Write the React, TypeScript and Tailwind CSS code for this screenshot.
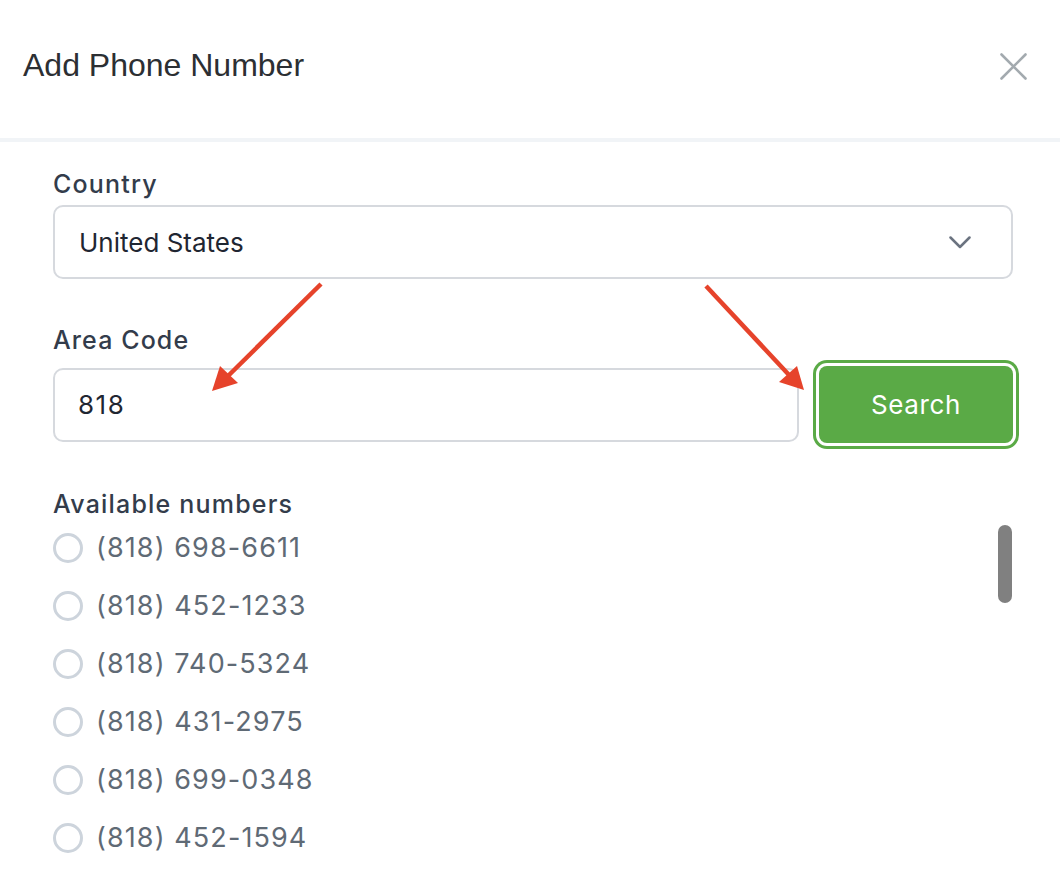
import React from "react";

const numbers = [
  "(818) 698-6611",
  "(818) 452-1233",
  "(818) 740-5324",
  "(818) 431-2975",
  "(818) 699-0348",
  "(818) 452-1594",
];

export default function App() {
  return (
    <div className="relative w-[1060px] h-[876px] bg-white overflow-hidden font-['Inter',sans-serif]">
      <div className="h-[138px] pt-[45px] pl-[23px] pr-[33px] flex items-start justify-between">
        <h1 className="font-['Liberation_Sans',Arial,sans-serif] text-[32px] leading-[40px] text-[#2c2f33]">
          Add Phone Number
        </h1>
        <svg className="mt-[8px]" width="27" height="27" viewBox="0 0 27 27" fill="none">
          <path d="M1.5 1.5L25.5 25.5M25.5 1.5L1.5 25.5" stroke="#a3aaaf" strokeWidth="2.6" strokeLinecap="round" />
        </svg>
      </div>
      <div className="h-[4px] bg-[#f1f4f7]" />
      <div className="pt-[26px] pl-[53px] pr-[47px]">
        <div className="text-[25px] leading-[32px] font-medium tracking-[1.2px] text-[#333c4b] mb-[5px]">Country</div>
        <div className="h-[74px] rounded-[10px] border-2 border-[#d6d9de] pl-[24px] pr-[40px] flex items-center justify-between">
          <span className="text-[26px] text-[#1f2632]">United States</span>
          <svg width="22" height="13" viewBox="0 0 22 13" fill="none">
            <path d="M1.5 1.5L11 11L20.5 1.5" stroke="#6b7380" strokeWidth="2.5" strokeLinecap="round" strokeLinejoin="round" />
          </svg>
        </div>
        <div className="mt-[45px] text-[25px] leading-[32px] font-medium tracking-[1.1px] text-[#333c4b] mb-[10px]">Area Code</div>
        <div className="flex items-center">
          <div className="flex-1 h-[74px] rounded-[10px] border-2 border-[#d6d9de] pl-[23px] flex items-center">
            <span className="text-[26px] tracking-[1.5px] text-[#1f2632]">818</span>
          </div>
          <button className="ml-[20px] w-[194px] h-[77px] rounded-[8px] bg-[#5aaa46] text-white text-[26px] tracking-[0.6px] shadow-[0_0_0_3px_#ffffff,0_0_0_6px_#5aaa46]">
            Search
          </button>
        </div>
        <div className="mt-[45px] text-[25px] leading-[32px] font-medium tracking-[1.2px] text-[#333c4b]">Available numbers</div>
        <div className="relative">
          <div className="flex flex-col">
            {numbers.map((n, i) => (
              <div key={i} className={"h-[58px] flex items-center " + (i === 0 ? "-mt-[1px]" : "")}>
                <span className="w-[30px] h-[30px] rounded-full border-[3px] border-[#cdd4dc] shrink-0" />
                <span className="ml-[13px] text-[27px] tracking-[1.1px] text-[#5f6a75]">{n}</span>
              </div>
            ))}
          </div>
          <div className="absolute right-[1px] top-[5px] w-[14px] h-[78px] rounded-full bg-[#808080]" />
        </div>
      </div>
      <svg className="absolute left-0 top-0 pointer-events-none" width="1060" height="876" viewBox="0 0 1060 876">
        <line x1="321" y1="284" x2="228" y2="376" stroke="#e6432b" strokeWidth="4.5" />
        <polygon points="212,391 220,366 238,383" fill="#e6432b" />
        <line x1="706" y1="286" x2="790" y2="376" stroke="#e6432b" strokeWidth="4.5" />
        <polygon points="804,390 797,366 779,382" fill="#e6432b" />
      </svg>
    </div>
  );
}
